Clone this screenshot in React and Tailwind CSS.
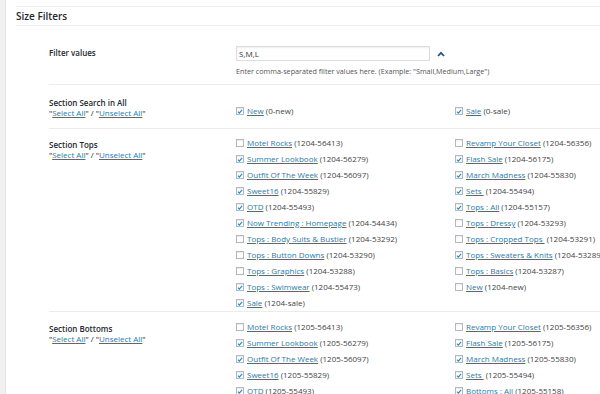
const tops = {
  left: [
    ['Motel Rocks', '1204-56413', false],
    ['Summer Lookbook', '1204-56279', true],
    ['Outfit Of The Week', '1204-56097', true],
    ['Sweet16', '1204-55829', true],
    ['OTD', '1204-55493', true],
    ['Now Trending : Homepage', '1204-54434', true],
    ['Tops : Body Suits & Bustier', '1204-53292', false],
    ['Tops : Button Downs', '1204-53290', false],
    ['Tops : Graphics', '1204-53288', false],
    ['Tops : Swimwear', '1204-55473', true],
    ['Sale', '1204-sale', true],
  ],
  right: [
    ['Revamp Your Closet', '1204-56356', false],
    ['Flash Sale', '1204-56175', true],
    ['March Madness', '1204-55830', true],
    ['Sets ', '1204-55494', true],
    ['Tops : All', '1204-55157', true],
    ['Tops : Dressy', '1204-53293', false],
    ['Tops : Cropped Tops ', '1204-53291', false],
    ['Tops : Sweaters & Knits', '1204-53289', true],
    ['Tops : Basics', '1204-53287', false],
    ['New', '1204-new', false],
  ],
};

const bottoms = {
  left: [
    ['Motel Rocks', '1205-56413', false],
    ['Summer Lookbook', '1205-56279', true],
    ['Outfit Of The Week', '1205-56097', true],
    ['Sweet16', '1205-55829', true],
    ['OTD', '1205-55493', true],
  ],
  right: [
    ['Revamp Your Closet', '1205-56356', false],
    ['Flash Sale', '1205-56175', true],
    ['March Madness', '1205-55830', true],
    ['Sets ', '1205-55494', true],
    ['Bottoms : All', '1205-55158', true],
  ],
};

function Box({ checked }) {
  return (
    <span className="mr-[3px] flex h-[8px] w-[8px] shrink-0 items-center justify-center border border-[#b4b9be] bg-white shadow-[inset_0_1px_1px_rgba(0,0,0,0.08)]">
      {checked && (
        <svg width="7" height="7" viewBox="0 0 8 8">
          <path d="M1.3 4.3 L3.1 6.1 L6.8 1.9" fill="none" stroke="#1e8cbe" strokeWidth="1.5" />
        </svg>
      )}
    </span>
  );
}

function Item({ item }) {
  const [name, code, checked] = item;
  return (
    <div className="flex h-[16px] items-center whitespace-nowrap">
      <Box checked={checked} />
      <span className="whitespace-pre text-[#1a7cb3] underline underline-offset-1">{name}</span>
      <span className="whitespace-pre text-[#444]"> ({code})</span>
    </div>
  );
}

function SectionLabel({ title, pt }) {
  return (
    <div className={`w-[187px] shrink-0 leading-[10px] ${pt}`}>
      <div className="font-semibold text-[#23282d]">{title}</div>
      <div className="text-[#23282d]">
        &quot;<span className="text-[#1a7cb3] underline">Select All</span>&quot; / &quot;
        <span className="text-[#1a7cb3] underline">Unselect All</span>&quot;
      </div>
    </div>
  );
}

function Section({ title, data, labelPt, itemsPt }) {
  return (
    <div className="flex border-t border-[#ececec]">
      <SectionLabel title={title} pt={labelPt} />
      <div className={`w-[219px] shrink-0 ${itemsPt}`}>
        {data.left.map((it) => <Item key={it[0]} item={it} />)}
      </div>
      <div className={itemsPt}>
        {data.right.map((it) => <Item key={it[0]} item={it} />)}
      </div>
    </div>
  );
}

export default function App() {
  return (
    <div className="flex h-[394px] w-[600px] overflow-hidden bg-white font-['Open_Sans','Noto_Sans',sans-serif] text-[8px]">
      <div className="w-[6px] shrink-0 border-r border-[#e5e5e5] bg-[#f1f1f1]" />
      <div className="min-w-0 flex-1 pl-[10px] pt-[6px]">
        <div className="border-t border-[#eee]">
          <h2 className="h-[19px] border-b border-[#eee] text-[10px] font-semibold leading-[18px] text-[#23282d]">
            Size Filters
          </h2>

          <div className="pl-[33px]">
            {/* filter values */}
            <div className="flex pb-[8px] pt-[20px]">
              <div className="w-[187px] shrink-0 pt-[1px] font-semibold leading-[12px] text-[#23282d]">
                Filter values
              </div>
              <div>
                <div className="flex items-center">
                  <div className="flex h-[15px] w-[194px] items-center border border-[#ddd] bg-white pl-[2px] text-[#333] shadow-[inset_0_1px_2px_rgba(0,0,0,0.07)]">
                    S,M,L
                  </div>
                  <svg className="ml-[7px]" width="8" height="6" viewBox="0 0 8 6">
                    <path d="M1 5 L4 1.8 L7 5" fill="none" stroke="#1f5a8a" strokeWidth="1.8" />
                  </svg>
                </div>
                <div className="mt-[5px] whitespace-nowrap text-[7.2px] leading-[10px] text-[#555]">
                  Enter comma-separated filter values here. (Example: &quot;Small,Medium,Large&quot;)
                </div>
              </div>
            </div>

            {/* search in all */}
            <div className="flex border-t border-[#ececec] pb-[9px]">
              <SectionLabel title="Section Search in All" pt="pt-[13px]" />
              <div className="w-[219px] shrink-0 pt-[18px]">
                <Item item={['New', '0-new', true]} />
              </div>
              <div className="pt-[18px]">
                <Item item={['Sale', '0-sale', true]} />
              </div>
            </div>

            <Section title="Section Tops" data={tops} labelPt="pt-[11px]" itemsPt="pt-[6px]" />
            <Section title="Section Bottoms" data={bottoms} labelPt="pt-[12px]" itemsPt="pt-[7px]" />
          </div>
        </div>
      </div>
    </div>
  );
}
